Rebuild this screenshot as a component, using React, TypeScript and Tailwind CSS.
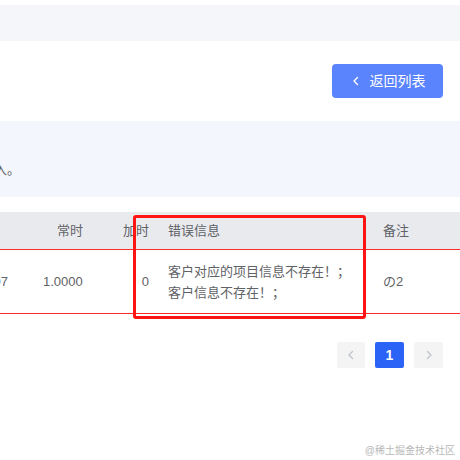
import React from "react";

const cjk = { fontFamily: '"Liberation Sans", "Noto Sans CJK SC", sans-serif' };

function Chevron({ dir, className }: { dir: "left" | "right"; className?: string }) {
  return (
    <svg viewBox="0 0 12 12" width="12" height="12" className={className} fill="none" stroke="currentColor" strokeWidth="1.4" strokeLinecap="round" strokeLinejoin="round">
      {dir === "left" ? <path d="M7.5 2.5 4 6l3.5 3.5" /> : <path d="M4.5 2.5 8 6 4.5 9.5" />}
    </svg>
  );
}

export default function App() {
  return (
    <div className="relative w-[460px] h-[460px] bg-white overflow-hidden text-[13px] text-[#5f6266]" style={cjk}>
      <div className="h-[5px]" />
      <div className="h-[36px] bg-[#f5f6fa]" />
      <div className="flex justify-end pr-[17px] pt-[23px]">
        <button className="flex h-[34px] w-[111px] items-center justify-center gap-[8px] rounded-[4px] bg-[#5a84fd] text-[14px] text-white">
          <Chevron dir="left" className="text-white" />
          <span>返回列表</span>
        </button>
      </div>
      <div className="mt-[23px] h-[76px] bg-[#f3f6fd]">
        <div className="flex w-[20px] justify-end overflow-hidden whitespace-nowrap pt-[39px] leading-[20px]">
          <span>请将数据填写后导入。</span>
        </div>
      </div>
      <div className="mt-[15px]">
        <div className="flex h-[37px] items-center bg-[#e9eaee] text-[#5f6266]">
          <div className="w-[30px]" />
          <div className="w-[70px] pl-[27px]">常时</div>
          <div className="w-[60px] pr-[11px] text-right">加时</div>
          <div className="w-[210px] pl-[8px]">错误信息</div>
          <div className="flex-1 pl-[13px]">备注</div>
        </div>
        <div className="h-[1px] bg-[#ff2a2a]" />
        <div className="flex h-[63px] items-center">
          <div className="flex w-[30px] justify-end overflow-hidden whitespace-nowrap pr-[22px]">2021-07</div>
          <div className="w-[70px] pl-[13px]">1.0000</div>
          <div className="w-[60px] pr-[11px] text-right">0</div>
          <div className="w-[210px] pl-[8px] leading-[21px]">
            <div>客户对应的项目信息不存在！；</div>
            <div>客户信息不存在！；</div>
          </div>
          <div className="flex-1 pl-[13px]">の2</div>
        </div>
        <div className="h-[1px] bg-[#ff2a2a]" />
      </div>
      <div className="mt-[28px] flex justify-end gap-[10px] pr-[17px]">
        <div className="flex h-[26px] w-[28px] items-center justify-center rounded-[2px] bg-[#f4f4f5] text-[#c0c4cc]">
          <Chevron dir="left" />
        </div>
        <div className="flex h-[26px] w-[29px] items-center justify-center rounded-[2px] bg-[#2b63f6] text-[14px] font-bold text-white">1</div>
        <div className="flex h-[26px] w-[29px] items-center justify-center rounded-[2px] bg-[#f4f4f5] text-[#c0c4cc]">
          <Chevron dir="right" />
        </div>
      </div>
      <div className="absolute left-[133px] top-[215px] h-[104px] w-[233px] rounded-[3px] border-[3px] border-[#ff1414]" />
      <div className="absolute right-[5px] top-[443px] text-[10px] text-[#b8b8b8]">@稀土掘金技术社区</div>
    </div>
  );
}
